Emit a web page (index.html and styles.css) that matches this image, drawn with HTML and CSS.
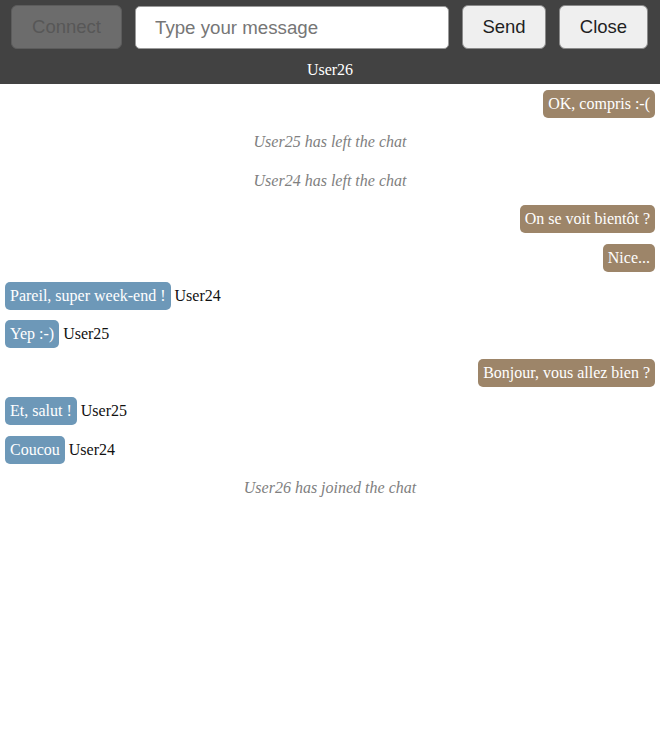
FILE: index.html
```html
<!DOCTYPE html>
<html lang="fr">
<head>
<meta charset="utf-8">
<title>Chat</title>
<link rel="stylesheet" href="styles.css">
</head>
<body>
<header class="header">
  <div class="controls">
    <button class="btn btn-connect" disabled>Connect</button>
    <input class="msg-input" type="text" placeholder="Type your message">
    <button class="btn btn-send">Send</button>
    <button class="btn btn-close">Close</button>
  </div>
  <div class="title">User26</div>
</header>
<ul class="messages">
  <li class="row row-mine"><span class="bubble bubble-mine">OK, compris :-(</span></li>
  <li class="row row-system">User25 has left the chat</li>
  <li class="row row-system">User24 has left the chat</li>
  <li class="row row-mine"><span class="bubble bubble-mine">On se voit bientôt ?</span></li>
  <li class="row row-mine"><span class="bubble bubble-mine">Nice...</span></li>
  <li class="row row-other"><span class="bubble bubble-other">Pareil, super week-end !</span><span class="author">User24</span></li>
  <li class="row row-other"><span class="bubble bubble-other">Yep :-)</span><span class="author">User25</span></li>
  <li class="row row-mine"><span class="bubble bubble-mine">Bonjour, vous allez bien ?</span></li>
  <li class="row row-other"><span class="bubble bubble-other">Et, salut !</span><span class="author">User25</span></li>
  <li class="row row-other"><span class="bubble bubble-other">Coucou</span><span class="author">User24</span></li>
  <li class="row row-system">User26 has joined the chat</li>
</ul>
</body>
</html>
```

FILE: styles.css
```css
html, body {
  margin: 0;
  padding: 0;
  background: #ffffff;
  font-family: "Liberation Serif", "Times New Roman", serif;
  font-size: 16px;
}

.header {
  background: #424242;
  height: 84px;
  box-sizing: border-box;
  padding-top: 5px;
}

.controls {
  display: flex;
  gap: 13px;
  padding: 0 12px 0 11px;
  height: 44px;
}

.btn {
  font-family: "Liberation Sans", Arial, sans-serif;
  font-size: 18.5px;
  border: 1px solid #8a8a8a;
  border-radius: 6px;
  background: #efefef;
  color: #1f1f1f;
  height: 44px;
  padding: 0;
  margin: 0;
}

.btn-connect {
  width: 111px;
  background: #6c6c6c;
  border-color: #5c5c5c;
  color: #575757;
}

.btn-send {
  width: 84px;
}

.btn-close {
  width: 89px;
}

.msg-input {
  width: 314px;
  box-sizing: border-box;
  height: 43px;
  margin-top: 1px;
  border: 1px solid #9a9a9a;
  border-radius: 5px;
  background: #ffffff;
  font-family: "Liberation Sans", Arial, sans-serif;
  font-size: 18.7px;
  padding: 0 19px;
  color: #222;
}

.msg-input::placeholder {
  color: #767676;
}

.title {
  color: #ffffff;
  text-align: center;
  line-height: 22px;
  padding-top: 10px;
}

.messages {
  list-style: none;
  margin: 0;
  padding: 6px 5px 0 5px;
  display: flex;
  flex-direction: column;
  gap: 10.4px;
}

.row {
  display: flex;
  align-items: center;
  height: 28px;
}

.row-mine {
  justify-content: flex-end;
}

.row-system {
  justify-content: center;
  font-style: italic;
  color: #808080;
}

.bubble {
  color: #ffffff;
  padding: 5px 5px;
  line-height: 18px;
  border-radius: 5px;
}

.bubble-mine {
  background: #9d8569;
}

.bubble-other {
  background: #6d98b8;
}

.author {
  color: #111;
  margin-left: 4px;
}
```
